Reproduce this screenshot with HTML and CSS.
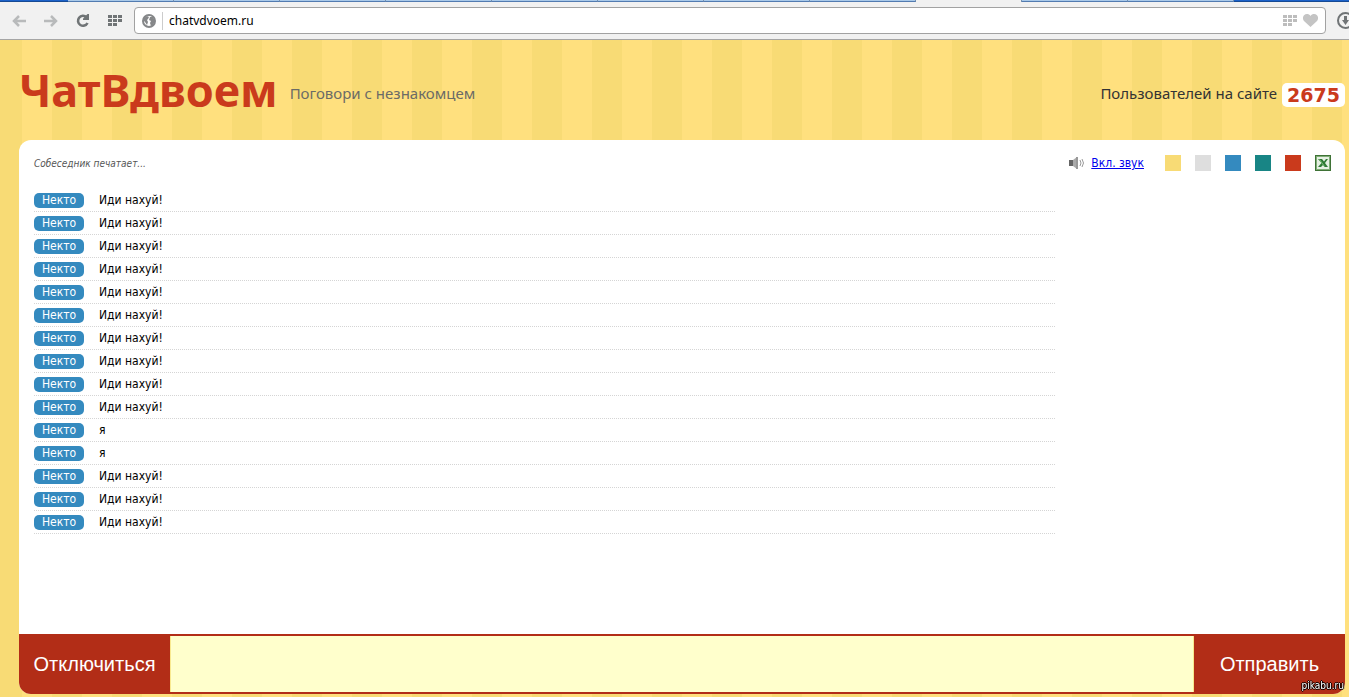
FILE: index.html
```
<!DOCTYPE html>
<html lang="ru">
<head>
    <meta charset="UTF-8">
    <meta name="viewport" content="width=device-width, initial-scale=1.0">
    <title>ЧатВдвоем</title>
    <link rel="stylesheet" href="styles.css">
</head>
<body>

<div class="browser">
    <div class="tabs">
        <span class="tab-space start"></span>
        <span class="tab"></span>
        <span class="tab"></span>
        <span class="tab"></span>
        <span class="tab"></span>
        <span class="tab"></span>
        <span class="tab"></span>
        <span class="tab"></span>
        <span class="tab"></span>
        <span class="tab active"></span>
        <span class="tab"></span>
        <span class="tab"></span>
        <span class="tab-space"></span>
    </div>
    <div class="toolbar">
        <button class="tool" aria-label="Назад">
            <svg width="14" height="12" viewBox="0 0 14 12"><path d="M2 6H14M7 1L2 6l5 5" fill="none" stroke="#b8babb" stroke-width="2.500"/></svg>
        </button>
        <button class="tool" aria-label="Вперед">
            <svg width="14" height="12" viewBox="0 0 14 12"><path d="M12 6H0M7 1l5 5-5 5" fill="none" stroke="#b8babb" stroke-width="2.500"/></svg>
        </button>
        <button class="tool" aria-label="Обновить">
            <svg width="14" height="14" viewBox="0 0 14 14"><path d="M10.500 3.200A5 5 0 1 0 11.500 9" fill="none" stroke="#707476" stroke-width="2.600"/><path d="M13 0v6H7V4.500L11.500 0z" fill="#707476"/></svg>
        </button>
        <button class="tool" aria-label="Экспресс-панель">
            <svg width="14" height="11" viewBox="0 0 14 11" fill="#707476"><path d="M0 0h4v3H0zM5 0h4v3H5zM10 0h4v3h-4zM0 4h4v3H0zM5 4h4v3H5zM10 4h4v3h-4zM0 8h4v3H0zM5 8h4v3H5z"/></svg>
        </button>
        <div class="address">
            <svg width="14" height="14" viewBox="0 0 14 14"><circle cx="7" cy="7" r="6" fill="#fff" stroke="#858789" stroke-width="2"/><path d="M2 4l3-2 2 1-1 2-1 1 1 2-1 3-2-3-2-2zM8 3l3 0 2 4-2 4-2 1-1-3 1-2-2-1z" fill="#858789"/></svg>
            <input class="url" type="text" value="chatvdvoem.ru" aria-label="Адрес">
            <svg width="14" height="11" viewBox="0 0 14 11" fill="#bdbdbd"><path d="M0 0h4v3H0zM5 0h4v3H5zM10 0h4v3h-4zM0 4h4v3H0zM5 4h4v3H5zM10 4h4v3h-4zM0 8h4v3H0zM5 8h4v3H5z"/></svg>
            <svg width="15" height="13" viewBox="0 0 15 13"><path d="M7.500 13L1 7C-.5 5-.3 2.500 1 1.200 3-.6 6-.2 7.500 2 9-.2 12-.6 14 1.200 15.300 2.500 15.500 5 14 7z" fill="#c4c4c4"/></svg>
        </div>
        <button class="downloads" aria-label="Загрузки">
            <svg width="17" height="17" viewBox="0 0 17 17"><circle cx="8.500" cy="8.500" r="7.500" fill="none" stroke="#707476" stroke-width="2"/><path d="M7 4h3v4h2l-3.500 5L5 8h2z" fill="#707476"/></svg>
        </button>
    </div>
</div>

<div class="header">
    <h1>ЧатВдвоем</h1>
    <p class="slogan">Поговори с незнакомцем</p>
    <p class="online">Пользователей на сайте</p>
    <span class="count">2675</span>
</div>

<div class="chat">
    <div class="chat-top">
        <p class="typing">Собеседник печатает...</p>
        <div class="sound">
            <svg width="16" height="14" viewBox="0 0 16 14"><path d="M1 4h4v6H1z" fill="#666"/><path d="M5 4l4-3v12l-4-3z" fill="#aaa"/><path d="M8 1h2v12H8z" fill="#999"/><path d="M12 4q2 3 0 6M14 3q3 4 0 8" fill="none" stroke="#999"/></svg>
            <a href="#">Вкл. звук</a>
        </div>
        <div class="themes">
            <button class="theme yellow" aria-label="Желтая тема"></button>
            <button class="theme gray" aria-label="Серая тема"></button>
            <button class="theme blue" aria-label="Синяя тема"></button>
            <button class="theme green" aria-label="Зеленая тема"></button>
            <button class="theme red" aria-label="Красная тема"></button>
            <button class="theme" aria-label="Excel">
                <svg width="16" height="16" viewBox="0 0 16 16"><path d="M0 0h16v16H0z" fill="#3f7236"/><path d="M1 1h14v14H1z" fill="#7fae76"/><path d="M2 2h12v12H2z" fill="#e6f0e3"/><path d="M3 4h4l2 2.500L11 4h2l-3 4 3 4H9.500L8 10l-2 2H3l3.500-4z" fill="#2f7a35"/><path d="M4.500 4.500l5 7" stroke="#7cc07a"/></svg>
            </button>
        </div>
    </div>

    <ul class="messages">
        <li><span class="nick">Некто</span>Иди нахуй!</li>
        <li><span class="nick">Некто</span>Иди нахуй!</li>
        <li><span class="nick">Некто</span>Иди нахуй!</li>
        <li><span class="nick">Некто</span>Иди нахуй!</li>
        <li><span class="nick">Некто</span>Иди нахуй!</li>
        <li><span class="nick">Некто</span>Иди нахуй!</li>
        <li><span class="nick">Некто</span>Иди нахуй!</li>
        <li><span class="nick">Некто</span>Иди нахуй!</li>
        <li><span class="nick">Некто</span>Иди нахуй!</li>
        <li><span class="nick">Некто</span>Иди нахуй!</li>
        <li><span class="nick">Некто</span>я</li>
        <li><span class="nick">Некто</span>я</li>
        <li><span class="nick">Некто</span>Иди нахуй!</li>
        <li><span class="nick">Некто</span>Иди нахуй!</li>
        <li><span class="nick">Некто</span>Иди нахуй!</li>
    </ul>

    <form class="controls">
        <button type="button" class="button">Отключиться</button>
        <textarea class="message-text" aria-label="Сообщение"></textarea>
        <button type="button" class="button">Отправить</button>
    </form>
</div>

<div class="watermark">pikabu.ru</div>

</body>
</html>
```
FILE: styles.css
```
* {
    box-sizing: border-box;
}
body {
    font-family: Tahoma, "DejaVu Sans Condensed", "DejaVu Sans", sans-serif;
    font-size: 12px;
    display: flex;
    flex-direction: column;
    min-height: 100vh;
    margin: 0;
    color: #000;
    /* 30px stripes */
    background: repeating-linear-gradient(90deg, #f8db75 0, #f8db75 22px, #ffe07e 22px, #ffe07e 52px, #f8db75 52px, #f8db75 60px);
}
h1, p, ul {
    margin: 0;
    padding: 0;
}
button {
    border: none;
    padding: 0;
    background: none;
    cursor: pointer;
}
svg {
    display: block;
    flex: none;
}

/* Browser bar */
.browser {
    height: 40px;
    background-color: #f1f1f1;
    border-bottom: 1px solid #a5a5a5;
}
.tabs {
    display: flex;
    height: 2px;
}
.tab {
    flex: 0 1 106px;
    background-color: #a9c9e9;
    border-right: 1px solid #7590b0;
    border-bottom: 1px solid #527bb0;
}
.tab.active {
    background-color: #f1f1f1;
    border-bottom: none;
}
.tab-space {
    flex: 1;
    background-color: #1c62c9;
    border-bottom: 1px solid #164a94;
}
.tab-space.start {
    flex: 0 0 68px;
}
.toolbar {
    display: flex;
    align-items: center;
    height: 37px;
    padding-left: 12px;
    overflow: hidden;
}
.tool {
    flex: none;
    width: 14px;
    margin-right: 18px;
}
.tool:nth-child(4) {
    margin-right: 12px;
}
.address {
    display: flex;
    flex: 1;
    align-items: center;
    gap: 6px;
    height: 27px;
    padding: 0 7px;
    background-color: #fff;
    border: 1px solid #a2a2a2;
    border-radius: 4px;
}
.url {
    flex: 1;
    min-width: 0;
    height: 18px;
    padding: 0 6px;
    border: none;
    border-left: 1px solid #ccc;
    outline: none;
    background: none;
    font-family: "Noto Sans", sans-serif;
    font-size: 12px;
}
.downloads {
    flex: none;
    margin: 0 -5px 0 11px;
}

/* Header */
.header {
    display: flex;
    align-items: center;
    height: 100px;
    padding: 0 4px 0 19px;
    font-family: Tahoma, "Noto Sans", sans-serif;
    font-size: 15px;
}
h1 {
    font-size: 45px;
    line-height: 56px;
    color: #ca3a1c;
}
.slogan {
    margin: 6px 0 0 12px;
    color: #6b6b66;
}
.online {
    margin: 6px 0 0 auto;
    color: #333;
}
.count {
    margin: 10px 0 0 5px;
    padding: 0 5px;
    line-height: 24px;
    background-color: #fff;
    border-radius: 5px;
    font-family: Verdana, "DejaVu Sans", sans-serif;
    font-size: 19px;
    font-weight: bold;
    color: #ca3a1c;
}

/* Chat */
.chat {
    display: flex;
    flex: 1;
    flex-direction: column;
    margin: 0 4px 3px 19px;
    background-color: #fff;
    border-radius: 12px;
    overflow: hidden;
}
.chat-top {
    display: flex;
    align-items: center;
    height: 46px;
    padding: 0 14px 0 15px;
}
.typing {
    font-size: 10px;
    font-style: italic;
    color: #555;
}
.sound {
    display: flex;
    align-items: center;
    gap: 7px;
    margin: 0 21px 0 auto;
}
.sound a {
    color: #0000ee;
}
.themes {
    display: flex;
    gap: 14px;
}
.theme {
    width: 16px;
    height: 16px;
}
.yellow {
    background-color: #f8db75;
}
.gray {
    background-color: #dedede;
}
.blue {
    background-color: #348abf;
}
.green {
    background-color: #188585;
}
.red {
    background-color: #ca3a1c;
}
.messages {
    flex: 1;
    margin: 3px 290px 0 15px;
    list-style: none;
}
.messages li {
    display: flex;
    align-items: center;
    height: 23px;
    border-bottom: 1px dotted #d5d5d5;
}
.nick {
    width: 50px;
    margin-right: 15px;
    line-height: 15px;
    text-align: center;
    background-color: #348abf;
    border-radius: 5px;
    color: #fff;
}
.controls {
    display: flex;
    height: 60px;
    background-color: #b22d17;
}
.button {
    flex: 0 0 151px;
    font-family: Arial, "Liberation Sans", sans-serif;
    font-size: 20px;
    color: #fff;
}
.button:hover {
    background-color: #ca3a1c;
}
.message-text {
    flex: 1;
    min-width: 0;
    margin: 2px 0;
    padding: 8px;
    background-color: #ffffcc;
    border: 1px solid #f8e98f;
    border-width: 0 1px;
    outline: none;
    resize: none;
    font-size: 16px;
}

.watermark {
    position: fixed;
    right: 5px;
    bottom: 4px;
    font-size: 10px;
    line-height: 14px;
    color: #fff;
    text-shadow: 1px 0 #000, -1px 0 #000, 0 1px #000, 0 -1px #000;
}
```
